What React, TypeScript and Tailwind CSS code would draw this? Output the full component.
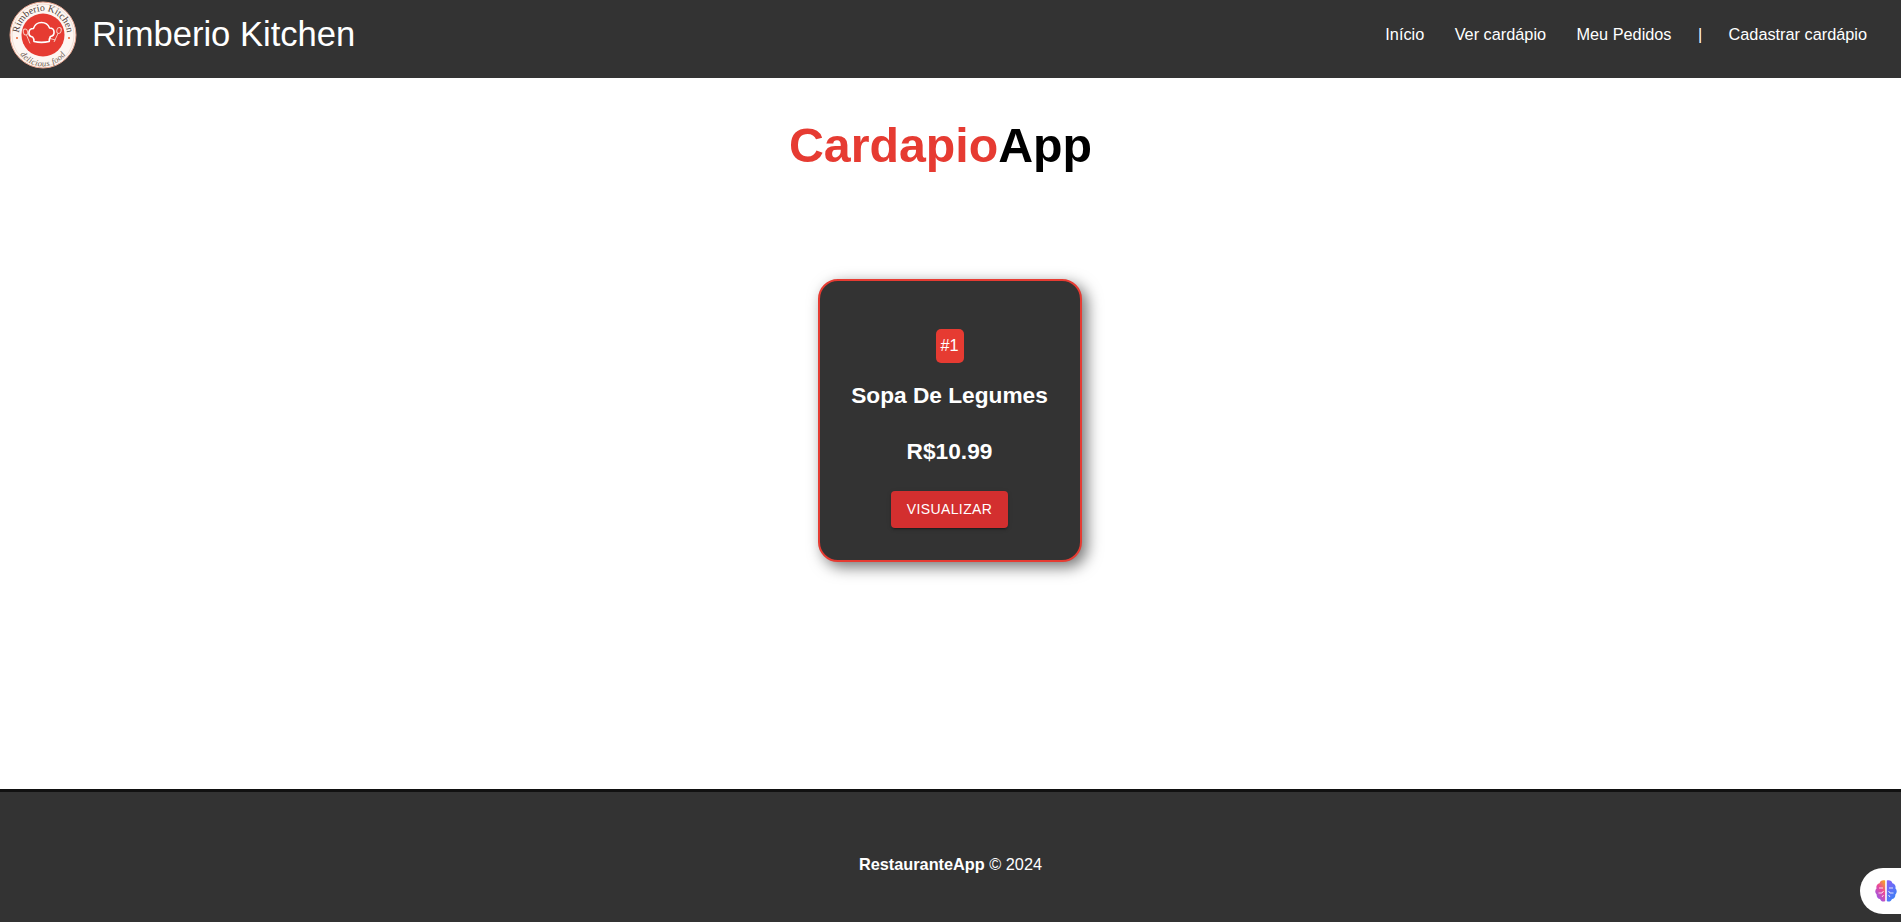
const NavLink = ({ text }: { text: string }) => (
	<a href="#" className="text-white text-[16.3px]">
		{text}
	</a>
);

const Logo = () => (
	<svg width="68" height="68" viewBox="0 0 68 68" className="shrink-0">
		<defs>
			<path id="logoTop" d="M 10 34 A 24 24 0 0 1 58 34" />
			<path id="logoBottom" d="M 6.5 38 A 27.5 27.5 0 0 0 61.5 38" />
		</defs>
		<circle cx="34" cy="34" r="33" fill="#fdf6f2" stroke="#e8a48e" strokeWidth="1" />
		<circle cx="34" cy="34" r="31" fill="none" stroke="#e9c9b5" strokeWidth="0.5" />
		<circle cx="34" cy="34" r="21.5" fill="#e63b32" />
		<text fontFamily="'Liberation Serif', serif" fontSize="9.8" fill="#4f4037">
			<textPath href="#logoTop" startOffset="50%" textAnchor="middle">
				Rimberio Kitchen
			</textPath>
		</text>
		<text fontFamily="'Liberation Serif', serif" fontSize="8.6" fontStyle="italic" letterSpacing="0.4" fill="#6f5f54">
			<textPath href="#logoBottom" startOffset="50%" textAnchor="middle">
				delicious food
			</textPath>
		</text>
		<circle cx="8" cy="37" r="1" fill="#e8622c" />
		<circle cx="60" cy="37" r="1" fill="#e8622c" />
		<ellipse cx="16.5" cy="31" rx="2.2" ry="3" transform="rotate(-15 16.5 31)" fill="none" stroke="#f7c9bd" strokeWidth="1" />
		<path d="M17.5 34 L21 42.5" stroke="#f7c9bd" strokeWidth="1" />
		<ellipse cx="50" cy="29.5" rx="2.2" ry="3" transform="rotate(15 50 29.5)" fill="none" stroke="#f7c9bd" strokeWidth="1" />
		<path d="M49 32.5 L45 41 M41 37.5 L46.5 39" stroke="#f7c9bd" strokeWidth="1" />
		<path
			d="M25 40.5 C25 38.5 24.6 37 23.6 36 C18.6 35.5 18.6 27.5 24.4 27.5 C25.8 23.5 28.8 21.5 32.5 21.5 C36.2 21.5 39.2 23.5 40.6 27 C46.4 27 46.4 35 41.4 35.5 C40.6 37 40.2 38.5 40.2 40.5 C35.5 41.5 29.5 41.5 25 40.5 Z"
			fill="#e63b32"
			stroke="#fff"
			strokeWidth="1.6"
			strokeLinejoin="round"
		/>
	</svg>
);

const BrainIcon = () => (
	<svg width="24" height="24" viewBox="0 0 24 24">
		<defs>
			<linearGradient id="brainLeft" x1="0.8" y1="0" x2="0.2" y2="1">
				<stop offset="0" stopColor="#f59e2c" />
				<stop offset="0.4" stopColor="#ec4899" />
				<stop offset="1" stopColor="#8b5cf6" />
			</linearGradient>
			<linearGradient id="brainRight" x1="0" y1="0" x2="0.6" y2="1">
				<stop offset="0" stopColor="#8b5cf6" />
				<stop offset="1" stopColor="#3b82f6" />
			</linearGradient>
		</defs>
		<path
			d="M11.2 1.5 C8.5 0.5 6 2 5.6 4.2 C3.2 4.8 1.8 7.2 2.6 9.2 C0.8 10.8 0.8 14 2.6 15.4 C2.4 18 4.2 19.8 6 20 C6.8 22.4 9.4 23.2 11.2 22 Z"
			fill="url(#brainLeft)"
		/>
		<path
			d="M12.8 1.5 C15.5 0.5 18 2 18.4 4.2 C20.8 4.8 22.2 7.2 21.4 9.2 C23.2 10.8 23.2 14 21.4 15.4 C21.6 18 19.8 19.8 18 20 C17.2 22.4 14.6 23.2 12.8 22 Z"
			fill="url(#brainRight)"
		/>
		<path d="M5 9 H9 M4.5 14 H8 L9.5 12 M8 18 L9.5 16" stroke="#fff" strokeWidth="0.8" fill="none" />
		<path d="M19 9 H15 M19.5 14 H16 L14.5 12 M16 18 L14.5 16" stroke="#fff" strokeWidth="0.8" fill="none" />
	</svg>
);

const App = () => {
	return (
		<div className="flex flex-col min-h-screen bg-white font-['Liberation_Sans',Arial,sans-serif]">
			<header className="flex items-center justify-between h-[78px] bg-[#333] pl-[9px] pr-[34px] pb-[8px]">
				<div className="flex items-center gap-[15px]">
					<Logo />
					<span className="text-white text-[34.6px] leading-none -mt-[2px]">Rimberio Kitchen</span>
				</div>
				<nav className="flex items-center gap-[30.4px] -mt-[2px]">
					<NavLink text="Início" />
					<NavLink text="Ver cardápio" />
					<NavLink text="Meu Pedidos" />
					<span className="text-white text-[16.3px] -mx-[4px]">|</span>
					<NavLink text="Cadastrar cardápio" />
				</nav>
			</header>
			<main className="flex flex-col items-center flex-1">
				<h1 className="mt-[40px] mr-[20px] text-[48.3px] leading-[55px] font-bold text-black">
					<span className="text-[#e63b32]">Cardapio</span>App
				</h1>
				<div className="flex flex-col items-center w-[264px] h-[283px] mt-[106px] mr-[2px] pt-[48px] bg-[#333] border-2 border-[#e63b32] rounded-[20px] shadow-[5px_5px_15px_rgba(0,0,0,0.55)]">
					<span className="flex items-center justify-center w-[28px] h-[34px] pb-[2px] bg-[#e63b32] rounded-[5px] text-white text-[16.3px]">
						#1
					</span>
					<h2 className="mt-[19px] text-[22.7px] leading-[26px] font-bold text-white">Sopa De Legumes</h2>
					<p className="mt-[30px] text-[22.7px] leading-[26px] font-bold text-white">R$10.99</p>
					<button className="mt-[27px] px-4 py-1.5 bg-[#d32f2f] rounded text-white text-sm leading-[24.5px] tracking-[0.4px] uppercase shadow-[0_3px_1px_-2px_rgba(0,0,0,0.2),0_2px_2px_0_rgba(0,0,0,0.14),0_1px_5px_0_rgba(0,0,0,0.12)]">
						Visualizar
					</button>
				</div>
			</main>
			<footer className="relative flex items-center justify-center h-[133px] bg-[#333] border-t-[3px] border-[#111] pt-[15px] text-white text-[16.3px]">
				<p>
					<strong>RestauranteApp</strong> © 2024
				</p>
				<div className="absolute right-0 bottom-[8px] flex items-center w-[41px] h-[46px] pl-[14px] bg-white rounded-l-full">
					<BrainIcon />
				</div>
			</footer>
		</div>
	);
};

export default App;
